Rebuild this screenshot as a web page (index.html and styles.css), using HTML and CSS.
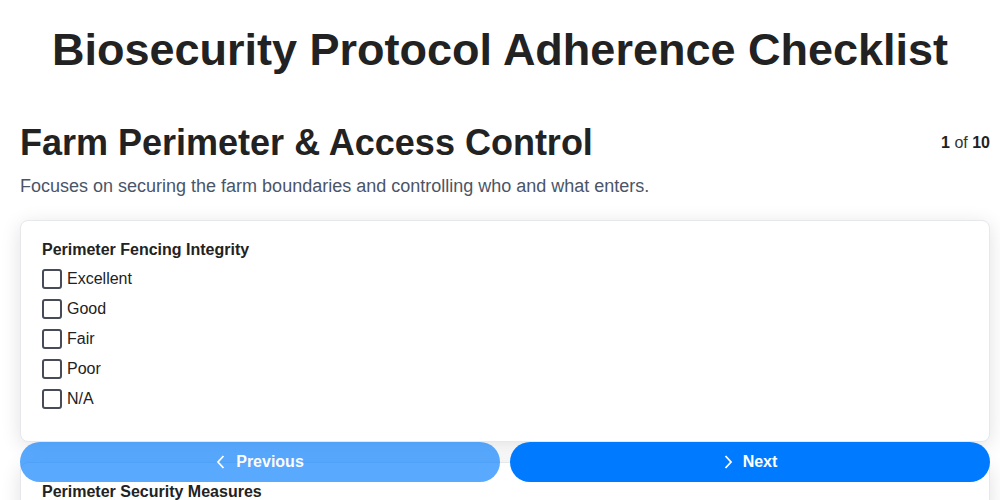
FILE: index.html
```html
<!DOCTYPE html>
<html lang="en">
<head>
<meta charset="utf-8">
<title>Biosecurity Protocol Adherence Checklist</title>
<link rel="stylesheet" href="styles.css">
</head>
<body>
<h1 class="title">Biosecurity Protocol Adherence Checklist</h1>
<div class="app">
  <div class="section-head">
    <h2 class="section-title">Farm Perimeter &amp; Access Control</h2>
    <div class="progress"><b>1</b> of <b>10</b></div>
  </div>
  <p class="section-desc">Focuses on securing the farm boundaries and controlling who and what enters.</p>

  <div class="card">
    <div class="q-label">Perimeter Fencing Integrity</div>
    <label class="opt"><span class="box"></span>Excellent</label>
    <label class="opt"><span class="box"></span>Good</label>
    <label class="opt"><span class="box"></span>Fair</label>
    <label class="opt"><span class="box"></span>Poor</label>
    <label class="opt"><span class="box"></span>N/A</label>
  </div>

  <div class="card">
    <div class="q-label">Perimeter Security Measures</div>
    <label class="opt"><span class="box"></span>Excellent</label>
    <label class="opt"><span class="box"></span>Good</label>
    <label class="opt"><span class="box"></span>Fair</label>
    <label class="opt"><span class="box"></span>Poor</label>
    <label class="opt"><span class="box"></span>N/A</label>
  </div>
</div>

<nav class="nav">
  <button class="btn btn-prev" disabled>
    <svg class="chev" viewBox="0 0 10 16" width="10" height="16"><path d="M7.5 2 L2 8 L7.5 14" fill="none" stroke="currentColor" stroke-width="1.8"/></svg>
    Previous
  </button>
  <button class="btn btn-next">
    <svg class="chev" viewBox="0 0 10 16" width="10" height="16"><path d="M2.5 2 L8 8 L2.5 14" fill="none" stroke="currentColor" stroke-width="1.8"/></svg>
    Next
  </button>
</nav>
</body>
</html>
```

FILE: styles.css
```css
* { box-sizing: border-box; }
html, body { margin: 0; padding: 0; background: #fff; }
body {
  font-family: "Liberation Sans", Arial, Helvetica, sans-serif;
  color: #222;
}
.app {
  padding: 0 10px 80px 20px;
}
.title {
  font-size: 45px;
  font-weight: 700;
  text-align: center;
  margin: 24px 0 44px;
  line-height: 52px;
  color: #222;
}
.section-head {
  display: flex;
  justify-content: space-between;
  align-items: center;
}
.section-title {
  font-size: 36px;
  font-weight: 700;
  margin: 0;
  line-height: 46px;
  color: #222;
}
.progress {
  font-size: 16px;
  color: #333;
}
.progress b { color: #222; }
.section-desc {
  font-size: 18px;
  color: #4a5568;
  margin: 7px 0 20px;
  line-height: 27px;
}
.card {
  border: 1px solid #e6e8ec;
  border-radius: 8px;
  padding: 20px 21px 22px;
  box-shadow: 0 4px 20px rgba(0,0,0,0.12);
  background: #fff;
  margin-bottom: 20px;
}
.q-label {
  font-size: 16px;
  font-weight: 700;
  line-height: 18px;
  margin-bottom: 10px;
  color: #222;
}
.opt {
  display: flex;
  align-items: center;
  gap: 5px;
  height: 20px;
  margin-bottom: 10px;
  font-size: 16px;
  color: #222;
}
.box {
  width: 20px;
  height: 20px;
  border: 2px solid #474b58;
  border-radius: 3px;
  background: #fff;
}
.nav {
  position: fixed;
  left: 20px;
  right: 10px;
  bottom: 18px;
  display: flex;
  gap: 10px;
}
.btn {
  flex: 1;
  height: 40px;
  border: none;
  border-radius: 20px;
  background: #007bff;
  color: #fff;
  font-family: "Liberation Sans", Arial, sans-serif;
  font-size: 16px;
  font-weight: 700;
  display: flex;
  align-items: center;
  justify-content: center;
  gap: 10px;
}
.btn-prev { opacity: 0.65; }
.chev { display: block; }
```
